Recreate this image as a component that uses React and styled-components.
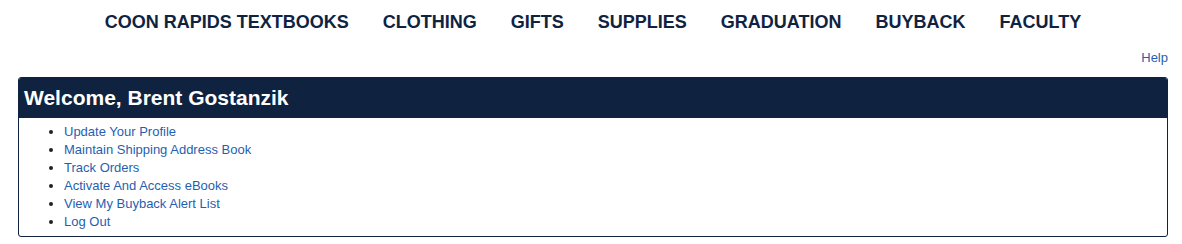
import React from "react";
import styled, { createGlobalStyle } from "styled-components";

const GlobalStyle = createGlobalStyle`
  body {
    margin: 0;
    font-family: "Liberation Sans", Arial, sans-serif;
    background: #fff;
  }
`;

const navItems = [
  "COON RAPIDS TEXTBOOKS",
  "CLOTHING",
  "GIFTS",
  "SUPPLIES",
  "GRADUATION",
  "BUYBACK",
  "FACULTY",
];

const links = [
  "Update Your Profile",
  "Maintain Shipping Address Book",
  "Track Orders",
  "Activate And Access eBooks",
  "View My Buyback Alert List",
  "Log Out",
];

const App = () => {
  return (
    <>
      <GlobalStyle />
      <Page>
        <Nav>
          {navItems.map((item) => (
            <NavLink key={item}>{item}</NavLink>
          ))}
        </Nav>
        <HelpRow>
          <HelpLink>Help</HelpLink>
        </HelpRow>
        <Panel>
          <PanelHeader>
            <Title>Welcome, Brent Gostanzik</Title>
          </PanelHeader>
          <LinkList>
            {links.map((l) => (
              <li key={l}>
                <ItemLink>{l}</ItemLink>
              </li>
            ))}
          </LinkList>
        </Panel>
      </Page>
    </>
  );
};

export default App;

const Page = styled.div`
  padding: 0 14px 0 18px;
`;

const Nav = styled.nav`
  display: flex;
  justify-content: center;
  gap: 34px;
  padding: 12px 0 0 0;
  height: 30px;
  box-sizing: border-box;
`;

const NavLink = styled.a`
  font-size: 18px;
  font-weight: 700;
  color: #0f2340;
  line-height: 20px;
  white-space: nowrap;
`;

const HelpRow = styled.div`
  display: flex;
  justify-content: flex-end;
  padding-top: 20px;
  height: 47px;
  box-sizing: border-box;
`;

const HelpLink = styled.a`
  font-size: 13px;
  color: #1f5fb0;
  line-height: 16px;
`;

const Panel = styled.div`
  border: 1px solid #0f2340;
  border-radius: 3px;
  width: 1150px;
  box-sizing: border-box;
  overflow: hidden;
`;

const PanelHeader = styled.div`
  background: #0f2340;
  height: 40px;
  display: flex;
  align-items: center;
  padding-left: 5px;
`;

const Title = styled.h2`
  margin: 0;
  color: #fff;
  font-size: 21px;
  font-weight: 700;
`;

const LinkList = styled.ul`
  margin: 0;
  padding: 5px 0 5px 45px;
  font-size: 13px;
  line-height: 18px;
  color: #222;
`;

const ItemLink = styled.a`
  color: #1f5fb0;
`;
